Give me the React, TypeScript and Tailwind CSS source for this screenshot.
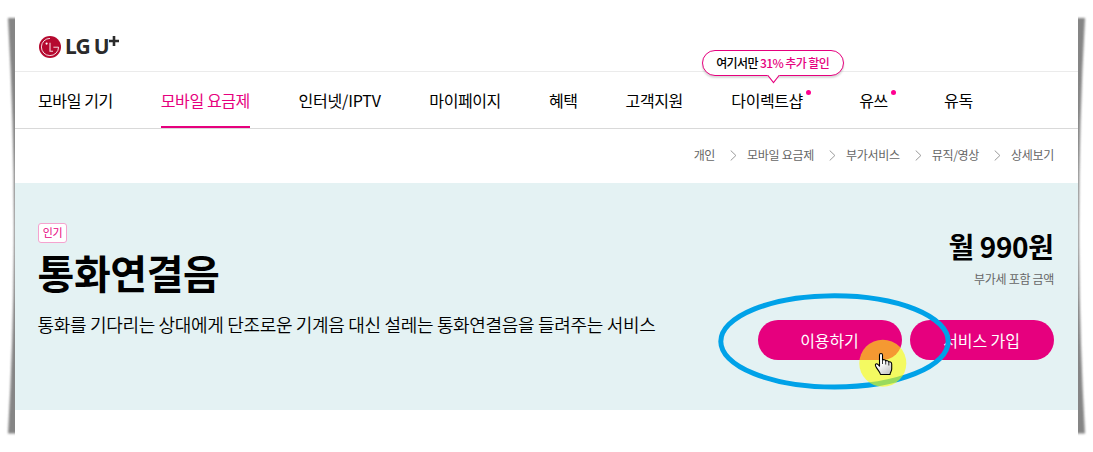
import React from "react";
import clsx from "clsx";

type MenuItem = {
  label: string;
  active?: boolean;
  dot?: boolean;
  balloon?: boolean;
  gap: string;
};

const menu: MenuItem[] = [
  { label: "모바일 기기", gap: "mr-[48px]" },
  { label: "모바일 요금제", active: true, gap: "mr-[48.5px]" },
  { label: "인터넷/IPTV", gap: "mr-[48.5px] tracking-[-0.15px]" },
  { label: "마이페이지", gap: "mr-[48px]" },
  { label: "혜택", gap: "mr-[48px]" },
  { label: "고객지원", gap: "mr-[48.5px]" },
  { label: "다이렉트샵", dot: true, balloon: true, gap: "mr-[56.3px]" },
  { label: "유쓰", dot: true, gap: "mr-[56.2px]" },
  { label: "유독", gap: "" },
];

const crumbs = ["개인", "모바일 요금제", "부가서비스", "뮤직/영상", "상세보기"];

const Logo = () => (
  <div className="flex items-center">
    <svg className="h-[22px] w-[22px]" viewBox="0 0 22 22" fill="none">
      <circle cx="11" cy="11" r="11" fill="#b5092f" />
      <path d="M11 2.4A8.6 8.6 0 1 0 19.6 11.2H14.4" stroke="#fff" strokeOpacity="0.85" strokeWidth="1" />
      <path d="M11 6.8V15.2H14" stroke="#fff" strokeOpacity="0.85" strokeWidth="1.1" />
      <circle cx="7.6" cy="7.6" r="1.1" fill="#fff" />
    </svg>
    <span className="mb-[2px] ml-[4px] flex font-['Noto_Sans'] text-[21px] leading-[22px] font-bold text-[#2b2b2b]">
      <span className="tracking-[-0.7px]">LG</span>
      <span className="ml-[3.5px]">U</span>
    </span>
    <svg className="mb-[12px] -ml-[0.5px] h-[10px] w-[10px]" viewBox="0 0 10 10">
      <path d="M5 0V10M0 5H10" stroke="#2b2b2b" strokeWidth="2.6" />
    </svg>
  </div>
);

const Balloon = () => (
  <div className="absolute -top-[37px] left-1/2 flex h-[26px] w-[142px] -translate-x-1/2 items-center justify-center rounded-full border border-[#e6007e] bg-white text-[12px] font-medium tracking-[-0.6px] whitespace-pre shadow-[0_2px_2px_rgba(0,0,0,0.15)]">
    <span>여기서만 </span>
    <span className="text-[#e6007e]">31% 추가 할인</span>
    <svg className="absolute top-[24px] left-[64px] h-[9px] w-[13px]" viewBox="0 0 13 9">
      <path d="M0 0H13L6.5 7.8Z" fill="#fff" />
      <path d="M0.5 0L6.5 7.5L12.5 0" fill="none" stroke="#e6007e" strokeWidth="1.1" />
    </svg>
  </div>
);

// page edges curl away from the paper
const PaperShadow = () => (
  <svg className="pointer-events-none absolute inset-0 h-[452px] w-[1093px]" viewBox="0 0 1093 452">
    <defs>
      <filter id="soft" x="-20%" y="-5%" width="140%" height="110%">
        <feGaussianBlur stdDeviation="1.1" />
      </filter>
    </defs>
    <path
      d="M8 18H1085Q1073 226 1085 433.5H8Q20 226 8 18Z"
      fill="#858585"
      filter="url(#soft)"
    />
  </svg>
);

const Pointer = () => (
  <svg className="pointer-events-none absolute inset-0 h-[452px] w-[1093px]" viewBox="0 0 1093 452">
    <defs>
      <linearGradient id="hand" x1="0" y1="0" x2="0.6" y2="1">
        <stop offset="0.5" stopColor="#fff" />
        <stop offset="1" stopColor="#ccc" />
      </linearGradient>
    </defs>
    <ellipse cx="834.5" cy="341.4" rx="113.7" ry="45.6" fill="none" stroke="#00a2e8" strokeWidth="5" />
    <circle cx="882.8" cy="363.2" r="23.5" fill="#ff0" fillOpacity="0.6" />
    <path
      d="M879.5 355C879.5 353 882.5 353 882.5 355V360.2C883.2 359.2 885.5 359.6 885.7 361C886.4 360.2 888.5 360.6 888.8 362C889.6 361.4 891.7 362 891.7 364V369C891.7 371.2 890 372.5 890 374.5H880.5C880 371.5 877.6 370 875.8 366.5C874.5 364.1 876.5 363 878 364.5L879.5 366.2Z"
      fill="url(#hand)"
      stroke="#000"
      strokeWidth="1.1"
      strokeLinejoin="round"
    />
    <path d="M882.5 360.5V364M885.7 361V364.5M888.8 362V365.5" stroke="#000" strokeWidth="0.8" />
  </svg>
);

const App = () => {
  return (
    <div className="relative h-[452px] w-[1093px] overflow-hidden bg-white font-['Noto_Sans_CJK_KR',sans-serif] text-black">
      <PaperShadow />

      <main className="relative mx-[15px] h-[452px] bg-white">
        <header className="h-[72px] border-b border-[#ebebeb] pt-[35px] pl-[24px]">
          <Logo />
        </header>

        <nav className="flex h-[57px] border-b border-[#d9d9d9] pl-[23px] text-[16px] leading-[24px] tracking-[-0.4px]">
          {menu.map((item) => (
            <a
              key={item.label}
              className={clsx(
                "relative h-[56px] pt-[16px] whitespace-nowrap",
                item.gap,
                item.active && "border-b-2 border-[#e6007e] text-[#e6007e]"
              )}
            >
              {item.balloon && (
                <div className="absolute top-[15px] left-[calc(50%+5.5px)]">
                  <Balloon />
                </div>
              )}
              {item.label}
              {item.dot && (
                <span className="absolute top-[18px] -right-[8px] h-[5px] w-[5px] rounded-full bg-[#ff0090]" />
              )}
            </a>
          ))}
        </nav>

        <div className="flex h-[54px] items-center justify-end pr-[24px] pb-[2px] text-[12px] tracking-[-0.3px] text-[#666]">
          {crumbs.map((crumb, i) => (
            <React.Fragment key={crumb}>
              {i > 0 && (
                <svg className="mr-[10px] ml-[15px] h-[11px] w-[7px]" viewBox="0 0 7 11" fill="none">
                  <path d="M0.7 0.5L5.9 5.5L0.7 10.5" stroke="#999" />
                </svg>
              )}
              <span>{crumb}</span>
            </React.Fragment>
          ))}
        </div>

        <section className="flex h-[227px] justify-between bg-[#e4f2f3] pr-[24px] pl-[23px]">
          <div className="pt-[40px]">
            <span className="flex h-[20px] w-[29px] items-center justify-center rounded-[3px] border border-[#f5a3cf] bg-white pb-px text-[11px] tracking-[-0.3px] text-[#e6007e]">
              인기
            </span>
            <h1 className="-ml-[0.5px] text-[40px] leading-[58px] font-bold tracking-[-0.4px]">통화연결음</h1>
            <p className="mt-[10px] -ml-[0.5px] text-[18px] leading-[26px] font-[350] tracking-[-0.32px]">
              통화를 기다리는 상대에게 단조로운 기계음 대신 설레는 통화연결음을 들려주는 서비스
            </p>
          </div>

          <div className="flex flex-col items-end pt-[43px]">
            <strong className="mr-[0.5px] text-[28px] leading-[40px] font-bold tracking-[-0.4px]">월 990원</strong>
            <p className="mt-[4px] text-[12px] leading-[18px] tracking-[-0.3px] text-[#666]">부가세 포함 금액</p>
            <div className="mt-[32px] flex gap-[8px] text-[16px] tracking-[-0.1px] text-white">
              <button className="h-[40px] w-[144px] rounded-full bg-[#e6007e] pr-px">이용하기</button>
              <button className="h-[40px] w-[144px] rounded-full bg-[#e6007e] pr-px">서비스 가입</button>
            </div>
          </div>
        </section>
      </main>

      <Pointer />
    </div>
  );
};

export default App;
